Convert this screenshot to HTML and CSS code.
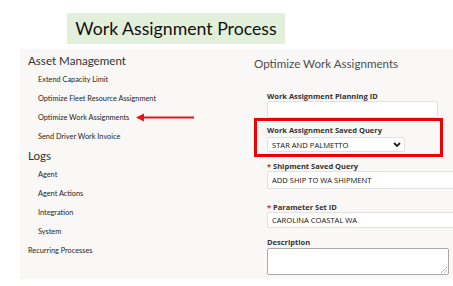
FILE: index.html
```html
<!DOCTYPE html>
<html lang="en">
<head>
  <meta charset="UTF-8">
  <title>Work Assignment Process</title>
  <link rel="stylesheet" href="styles.css">
</head>
<body>
  <div class="title-box">Work Assignment Process</div>

  <div class="panel">
    <div class="menu">
      <div class="menu-heading">Asset Management</div>
      <div class="menu-item">Extend Capacity Limit</div>
      <div class="menu-item">Optimize Fleet Resource Assignment</div>
      <div class="menu-item pointed">
        Optimize Work Assignments
        <svg class="arrow" width="58" height="9" viewBox="0 0 58 9">
          <line x1="6" y1="4.5" x2="58" y2="4.5" stroke="#ee1111" stroke-width="2"/>
          <polygon points="0,4.5 8,0.5 8,8.5" fill="#ee1111"/>
        </svg>
      </div>
      <div class="menu-item">Send Driver Work Invoice</div>
      <div class="menu-heading">Logs</div>
      <div class="menu-item">Agent</div>
      <div class="menu-item">Agent Actions</div>
      <div class="menu-item">Integration</div>
      <div class="menu-item">System</div>
      <div class="menu-item top-level">Recurring Processes</div>
    </div>

    <div class="form">
      <h2>Optimize Work Assignments</h2>

      <div class="field first">
        <label>Work Assignment Planning ID</label>
        <div class="input short"></div>
      </div>

      <div class="highlight">
        <label>Work Assignment Saved Query</label>
        <div class="select">
          <span>STAR AND PALMETTO</span>
          <svg width="8" height="6" viewBox="0 0 8 6">
            <polyline points="1,1 4,4 7,1" fill="none" stroke="#222" stroke-width="1.8"/>
          </svg>
        </div>
      </div>

      <div class="field shipment">
        <label><span class="req">*</span> Shipment Saved Query</label>
        <div class="input wide">ADD SHIP TO WA SHIPMENT</div>
      </div>

      <div class="field params">
        <label><span class="req">*</span> Parameter Set ID</label>
        <div class="input wide thin">CAROLINA COASTAL WA</div>
      </div>

      <div class="field desc">
        <label>Description</label>
        <div class="textarea">
          <svg class="grip" width="6" height="6" viewBox="0 0 6 6">
            <line x1="0" y1="6" x2="6" y2="0" stroke="#aaa" stroke-width="0.8"/>
            <line x1="3" y1="6" x2="6" y2="3" stroke="#aaa" stroke-width="0.8"/>
          </svg>
        </div>
      </div>
    </div>
  </div>
</body>
</html>
```

FILE: styles.css
```css
/* Page */
body {
  margin: 0;
  background: #fff;
  font-family: Lato, "Open Sans", sans-serif;
  color: #333;
  overflow: hidden;
}

.title-box {
  margin: 13px 0 0 67px;
  width: 218px;
  height: 31px;
  background: #e2efda;
  display: flex;
  align-items: center;
  justify-content: center;
  font-size: 17.7px;
  color: #111;
}

.panel {
  margin: 5px 0 0 20px;
  height: 230px;
  background: #f9f8f7;
  display: flex;
}

/* Left menu */
.menu {
  width: 214px;
  padding-top: 2px;
  flex-shrink: 0;
}

.menu-heading {
  padding-left: 8px;
  height: 19px;
  line-height: 19px;
  font-size: 11.6px;
  color: #333;
}

.menu-item {
  padding-left: 18px;
  height: 19px;
  line-height: 19px;
  font-size: 7.35px;
  color: #1e1e1e;
  display: flex;
  align-items: center;
}

.menu-item.top-level {
  padding-left: 8px;
}

.arrow {
  margin-left: 7px;
}

/* Right form */
.form {
  flex: 1;
  padding-left: 20px;
}

.form h2 {
  margin: 7px 0 0;
  font-size: 11.6px;
  line-height: 16px;
  font-weight: 400;
  color: #4d4d4d;
}

.form label {
  display: block;
  font-family: "Open Sans", sans-serif;
  font-size: 7.5px;
  line-height: 10px;
  font-weight: 700;
  color: #333;
}

.req {
  color: #e02020;
}

.field {
  margin-left: 13px;
}

.field.first {
  margin-top: 19px;
}

.input {
  box-sizing: border-box;
  background: #fff;
  border: 1px solid #e4e2e0;
  border-radius: 2px;
  font-family: "Open Sans", sans-serif;
  font-size: 7.6px;
  line-height: 16px;
  padding-left: 4px;
  color: #111;
}

.input.short {
  width: 171px;
  height: 17px;
}

.input.wide {
  height: 18px;
  margin-right: -4px;
}

.input.thin {
  height: 16px;
  line-height: 14px;
}

.highlight {
  box-sizing: border-box;
  width: 189px;
  height: 39px;
  border: 3px solid #f00000;
  padding: 4px 0 0 10px;
}

.select {
  box-sizing: border-box;
  width: 138px;
  height: 15px;
  margin-top: 2px;
  background: #fff;
  border: 1px solid #e4e2e0;
  border-radius: 2px;
  display: flex;
  align-items: center;
  justify-content: space-between;
  padding: 0 3px 0 4px;
  font-family: "Open Sans", sans-serif;
  font-size: 7.6px;
  color: #111;
}

.field.shipment {
  margin-top: 4px;
}

.field.params {
  margin-top: 13px;
}

.field.desc {
  margin-top: 9px;
}

.field.desc label {
  margin-bottom: 1px;
}

.textarea {
  position: relative;
  box-sizing: border-box;
  width: 182px;
  height: 27px;
  background: #fff;
  border: 1px solid #a9a9a9;
  border-radius: 2px;
}

.grip {
  position: absolute;
  right: 1px;
  bottom: 1px;
}
```
